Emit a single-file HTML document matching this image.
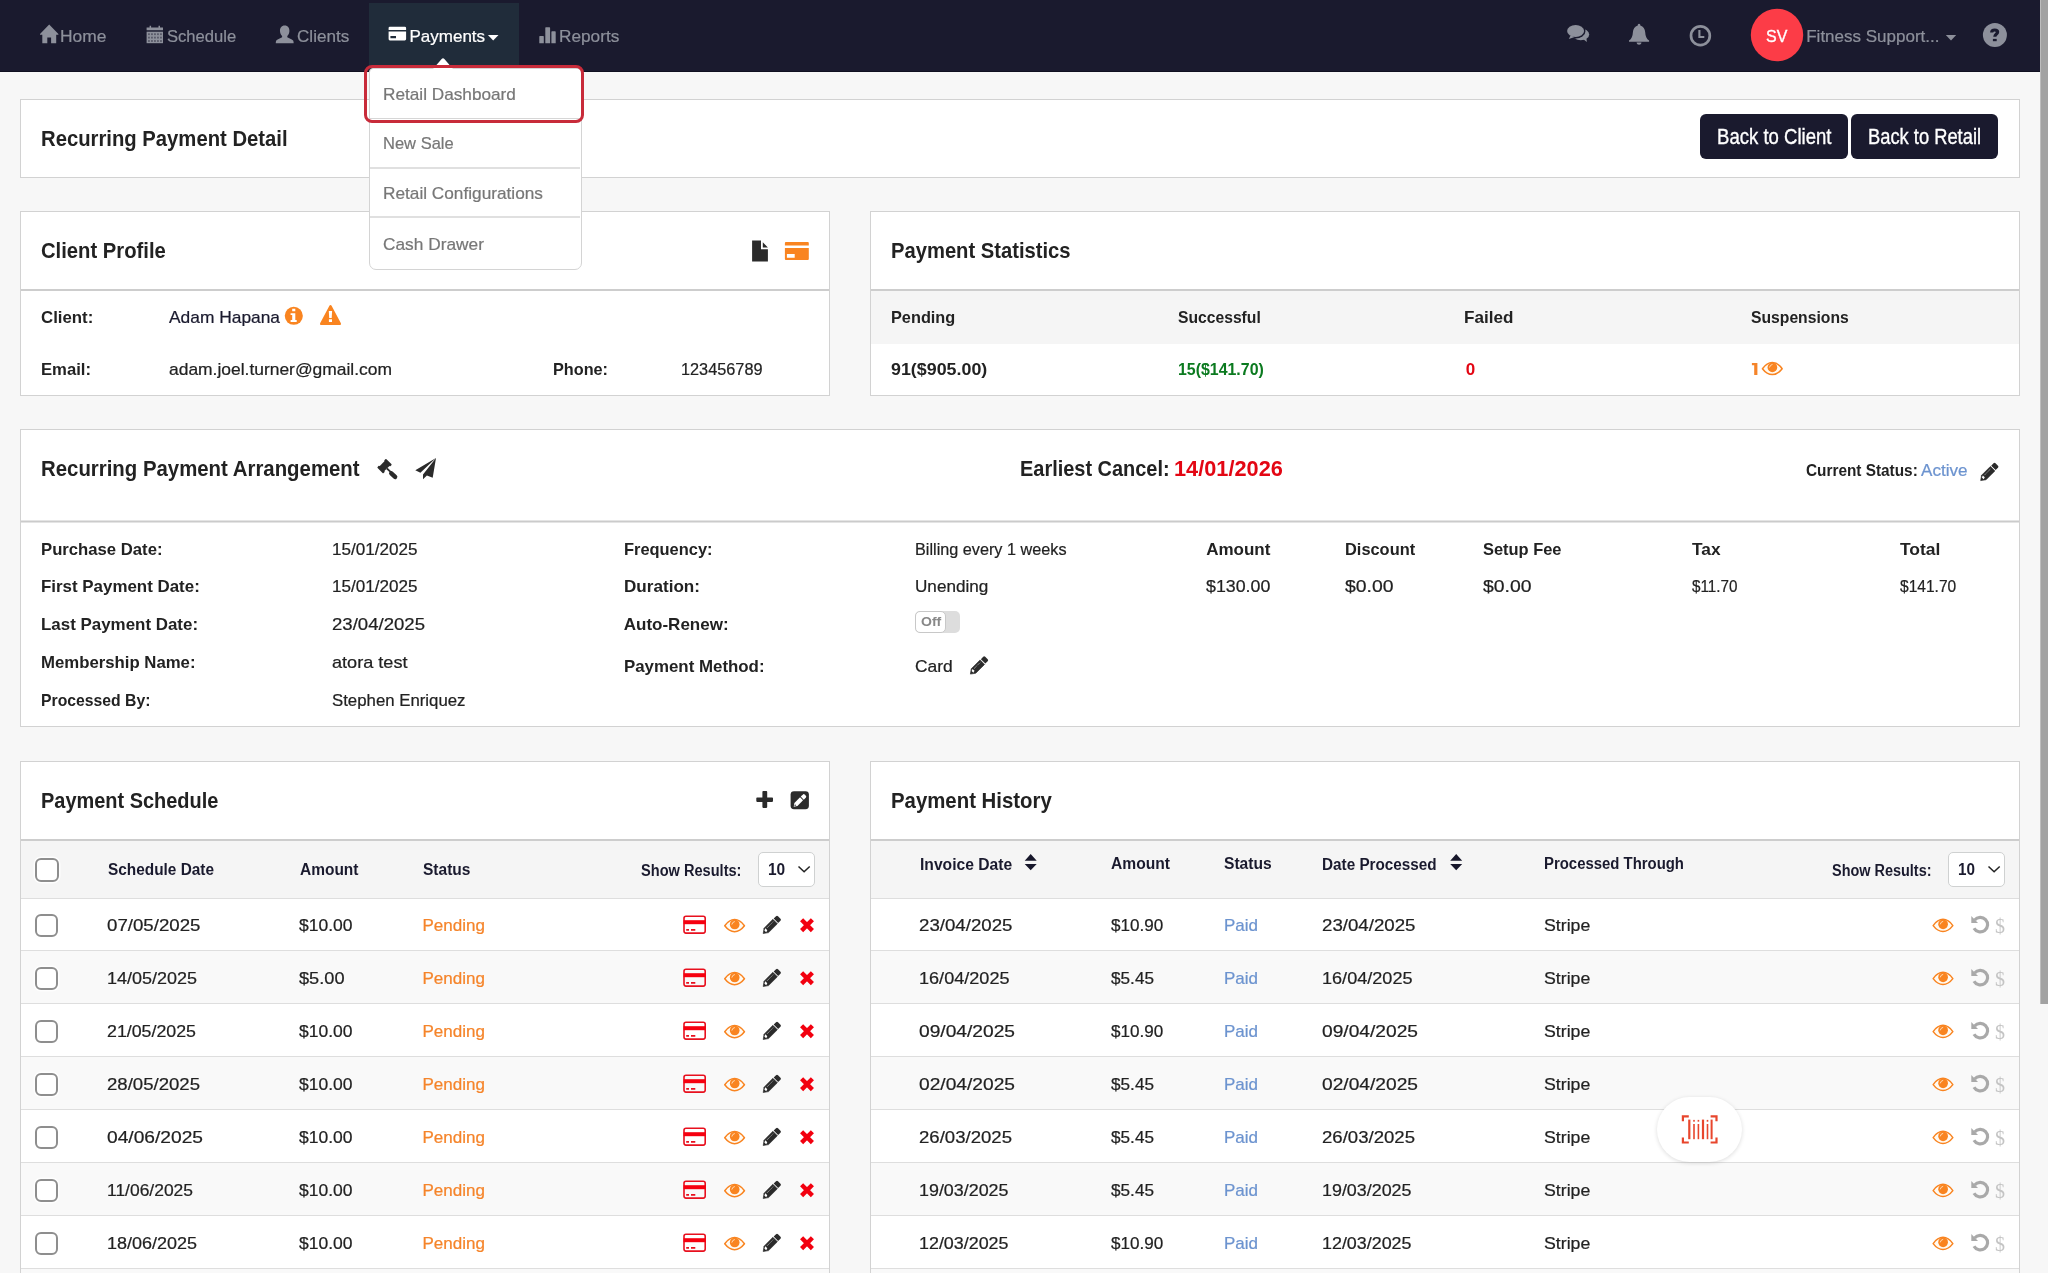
<!DOCTYPE html>
<html><head><meta charset="utf-8"><title>Recurring Payment Detail</title>
<style>
html,body{margin:0;padding:0}
body{width:2048px;height:1273px;overflow:hidden;position:relative;background:#f7f7f7;font-family:"Liberation Sans",sans-serif}
.t{position:absolute;white-space:nowrap;line-height:1;transform-origin:0 50%;font-family:"Liberation Sans",sans-serif}
.t.m{-webkit-text-stroke:0.35px currentColor}
.t.r{-webkit-text-stroke:0.22px currentColor}
.t.s{font-family:"Liberation Serif",serif}
.b{position:absolute;box-sizing:border-box}
.card{position:absolute;box-sizing:border-box;background:#fff;border:1px solid #d2d2d2}
svg{position:absolute;overflow:visible}
</style></head><body>
<!-- navbar -->
<div class="b" style="left:0;top:0;width:2040px;height:72px;background:#1a1a2e;border-bottom:1px solid #101020"></div>
<div class="b" style="left:368.6px;top:2.8px;width:150.2px;height:68.4px;background:#202c3a"></div>
<!-- scrollbar -->
<div class="b" style="left:2040px;top:0;width:8px;height:1004px;background:#a2a2a2;border-left:1px solid #bdbdbd"></div>

<!-- card 1 -->
<div class="card" style="left:20px;top:99px;width:2000px;height:79px"></div>
<div class="b" style="left:1700px;top:114px;width:148px;height:45px;background:#1a1a2e;border-radius:6px"></div>
<div class="b" style="left:1851px;top:114px;width:147px;height:45px;background:#1a1a2e;border-radius:6px"></div>

<!-- card 2 -->
<div class="card" style="left:20px;top:211px;width:810px;height:185px"></div>
<div class="b" style="left:21px;top:289px;width:808px;height:2px;background:#cdcdcd"></div>
<!-- card 3 -->
<div class="card" style="left:870px;top:211px;width:1150px;height:185px"></div>
<div class="b" style="left:871px;top:291px;width:1148px;height:53px;background:#f5f5f5"></div>
<div class="b" style="left:871px;top:289px;width:1148px;height:2px;background:#cdcdcd"></div>
<!-- card 4 -->
<div class="card" style="left:20px;top:429px;width:2000px;height:298px"></div>
<div class="b" style="left:21px;top:520px;width:1998px;height:3px;background:linear-gradient(#e4e4e4 0 1px,#cbcbcb 1px 2px,#e4e4e4 2px 3px)"></div>
<!-- toggle -->
<div class="b" style="left:915px;top:611px;width:45px;height:22px;background:#ddd;border-radius:5px"></div>
<div class="b" style="left:915px;top:611px;width:31px;height:22px;background:#fff;border:1px solid #c8c8c8;border-radius:5px"></div>

<!-- card 5 -->
<div class="card" style="left:20px;top:761px;width:810px;height:560px"></div>
<div class="b" style="left:21px;top:841px;width:808px;height:57px;background:#f5f5f5"></div>
<div class="b" style="left:21px;top:839px;width:808px;height:2px;background:#cdcdcd"></div>
<!-- card 6 -->
<div class="card" style="left:870px;top:761px;width:1150px;height:560px"></div>
<div class="b" style="left:871px;top:841px;width:1148px;height:57px;background:#f5f5f5"></div>
<div class="b" style="left:871px;top:839px;width:1148px;height:2px;background:#cdcdcd"></div>
<div class="b row" style="left:21px;top:898px;width:808px;height:52px;background:#fff;border-top:1px solid #dedede"></div>
<div class="b row" style="left:871px;top:898px;width:1148px;height:52px;background:#fff;border-top:1px solid #dedede"></div>
<div class="b row" style="left:21px;top:950px;width:808px;height:53px;background:#f9f9f9;border-top:1px solid #dedede"></div>
<div class="b row" style="left:871px;top:950px;width:1148px;height:53px;background:#f9f9f9;border-top:1px solid #dedede"></div>
<div class="b row" style="left:21px;top:1003px;width:808px;height:53px;background:#fff;border-top:1px solid #dedede"></div>
<div class="b row" style="left:871px;top:1003px;width:1148px;height:53px;background:#fff;border-top:1px solid #dedede"></div>
<div class="b row" style="left:21px;top:1056px;width:808px;height:53px;background:#f9f9f9;border-top:1px solid #dedede"></div>
<div class="b row" style="left:871px;top:1056px;width:1148px;height:53px;background:#f9f9f9;border-top:1px solid #dedede"></div>
<div class="b row" style="left:21px;top:1109px;width:808px;height:53px;background:#fff;border-top:1px solid #dedede"></div>
<div class="b row" style="left:871px;top:1109px;width:1148px;height:53px;background:#fff;border-top:1px solid #dedede"></div>
<div class="b row" style="left:21px;top:1162px;width:808px;height:53px;background:#f9f9f9;border-top:1px solid #dedede"></div>
<div class="b row" style="left:871px;top:1162px;width:1148px;height:53px;background:#f9f9f9;border-top:1px solid #dedede"></div>
<div class="b row" style="left:21px;top:1215px;width:808px;height:53px;background:#fff;border-top:1px solid #dedede"></div>
<div class="b row" style="left:871px;top:1215px;width:1148px;height:53px;background:#fff;border-top:1px solid #dedede"></div>
<div class="b row" style="left:21px;top:1268px;width:808px;height:53px;background:#f9f9f9;border-top:1px solid #dedede"></div>
<div class="b row" style="left:871px;top:1268px;width:1148px;height:53px;background:#f9f9f9;border-top:1px solid #dedede"></div>
<div class="b" style="left:34.5px;top:858px;width:24px;height:24px;background:#fff;border:2px solid #8e8e8e;border-radius:6px;box-shadow:0 0 0 1.5px rgba(255,255,255,.85)"></div>
<div class="b" style="left:34.6px;top:913.7px;width:23.6px;height:23.6px;background:#fff;border:2px solid #8e8e8e;border-radius:6px;box-shadow:0 0 0 1.5px rgba(255,255,255,.85)"></div>
<div class="b" style="left:34.6px;top:966.7px;width:23.6px;height:23.6px;background:#fff;border:2px solid #8e8e8e;border-radius:6px;box-shadow:0 0 0 1.5px rgba(255,255,255,.85)"></div>
<div class="b" style="left:34.6px;top:1019.7px;width:23.6px;height:23.6px;background:#fff;border:2px solid #8e8e8e;border-radius:6px;box-shadow:0 0 0 1.5px rgba(255,255,255,.85)"></div>
<div class="b" style="left:34.6px;top:1072.7px;width:23.6px;height:23.6px;background:#fff;border:2px solid #8e8e8e;border-radius:6px;box-shadow:0 0 0 1.5px rgba(255,255,255,.85)"></div>
<div class="b" style="left:34.6px;top:1125.7px;width:23.6px;height:23.6px;background:#fff;border:2px solid #8e8e8e;border-radius:6px;box-shadow:0 0 0 1.5px rgba(255,255,255,.85)"></div>
<div class="b" style="left:34.6px;top:1178.7px;width:23.6px;height:23.6px;background:#fff;border:2px solid #8e8e8e;border-radius:6px;box-shadow:0 0 0 1.5px rgba(255,255,255,.85)"></div>
<div class="b" style="left:34.6px;top:1231.7px;width:23.6px;height:23.6px;background:#fff;border:2px solid #8e8e8e;border-radius:6px;box-shadow:0 0 0 1.5px rgba(255,255,255,.85)"></div>
<div class="b" style="left:34.6px;top:1284.7px;width:23.6px;height:23.6px;background:#fff;border:2px solid #8e8e8e;border-radius:6px;box-shadow:0 0 0 1.5px rgba(255,255,255,.85)"></div>

<!-- selects -->
<div class="b" style="left:758px;top:852px;width:57px;height:35px;background:#fff;border:1px solid #cfd1d1;border-radius:5px"></div>
<div class="b" style="left:1948px;top:852px;width:57px;height:35px;background:#fff;border:1px solid #cfd1d1;border-radius:5px"></div>

<!-- dropdown -->
<div class="b" style="left:369px;top:68px;width:212.5px;height:201.5px;background:#fff;border:1.3px solid #d4d4d4;border-radius:4px 4px 7px 7px"></div>
<div class="b" style="left:370px;top:118px;width:210px;height:1px;background:#d6d6d6"></div>
<div class="b" style="left:370px;top:167px;width:210px;height:2px;background:#e0e0e0"></div>
<div class="b" style="left:370px;top:216px;width:210px;height:2px;background:#e0e0e0"></div>
<svg style="left:431px;top:58px" width="24" height="12" viewBox="0 0 24 12"><path d="M1.2 12 L10.6 1.0 Q12 -0.4 13.4 1.0 L22.8 12Z" fill="#fff"/></svg>
<div class="b" style="left:364.2px;top:64.8px;width:220px;height:58.7px;border:3px solid #c82b3a;border-radius:8px"></div>

<!-- floating barcode -->
<div class="b" style="left:1657px;top:1097px;width:85px;height:64.5px;background:#fff;border-radius:32.5px;box-shadow:0 1px 4px rgba(0,0,0,.14)"></div>

<svg style="left:0;top:0" width="2048" height="1273" viewBox="0 0 2048 1273">
<path d="M49.2 24.6 L58.4 34.0 L58.4 34.7 L56.2 34.7 L56.2 43.2 L51.1 43.2 L51.1 37.6 L47.3 37.6 L47.3 43.2 L42.3 43.2 L42.3 34.7 L40.0 34.7 L40.0 34.0 Z" fill="#8d909b"/>
<path d="M146.6 27.4 h16.4 v2.8 h-16.4z M149.6 25.8 h1.5 v2 h-1.5z M158.5 25.8 h1.5 v2 h-1.5z" fill="#8d909b"/>
<rect x="146.6" y="31.7" width="16.4" height="11.5" fill="#8d909b"/>
<rect x="148.20" y="33.30" width="1.5" height="1.8" fill="#1a1a2e" opacity="0.55"/>
<rect x="151.20" y="33.30" width="1.5" height="1.8" fill="#1a1a2e" opacity="0.55"/>
<rect x="154.20" y="33.30" width="1.5" height="1.8" fill="#1a1a2e" opacity="0.55"/>
<rect x="157.20" y="33.30" width="1.5" height="1.8" fill="#1a1a2e" opacity="0.55"/>
<rect x="160.20" y="33.30" width="1.5" height="1.8" fill="#1a1a2e" opacity="0.55"/>
<rect x="148.20" y="36.70" width="1.5" height="1.8" fill="#1a1a2e" opacity="0.55"/>
<rect x="151.20" y="36.70" width="1.5" height="1.8" fill="#1a1a2e" opacity="0.55"/>
<rect x="154.20" y="36.70" width="1.5" height="1.8" fill="#1a1a2e" opacity="0.55"/>
<rect x="157.20" y="36.70" width="1.5" height="1.8" fill="#1a1a2e" opacity="0.55"/>
<rect x="160.20" y="36.70" width="1.5" height="1.8" fill="#1a1a2e" opacity="0.55"/>
<rect x="148.20" y="40.10" width="1.5" height="1.8" fill="#1a1a2e" opacity="0.55"/>
<rect x="151.20" y="40.10" width="1.5" height="1.8" fill="#1a1a2e" opacity="0.55"/>
<rect x="154.20" y="40.10" width="1.5" height="1.8" fill="#1a1a2e" opacity="0.55"/>
<rect x="157.20" y="40.10" width="1.5" height="1.8" fill="#1a1a2e" opacity="0.55"/>
<rect x="160.20" y="40.10" width="1.5" height="1.8" fill="#1a1a2e" opacity="0.55"/>
<path d="M284.7 25.5 C288 25.5 289.6 28.2 289.4 31.2 C289.2 33.6 288.2 35.2 287.3 36.0 L287.3 37.3 L291.8 39.5 Q293.6 40.4 293.6 42.0 L293.6 43.2 L275.8 43.2 L275.8 42.0 Q275.8 40.4 277.6 39.5 L282.1 37.3 L282.1 36.0 C281.2 35.2 280.2 33.6 280.0 31.2 C279.8 28.2 281.4 25.5 284.7 25.5 Z" fill="#8d909b"/>
<path d="M389.9 26.7 h14.9 q1.3 0 1.3 1.3 v2.0 h-17.5 v-2.0 q0 -1.3 1.3 -1.3z M388.6 31.6 h17.5 v7.5 q0 1.3 -1.3 1.3 h-14.9 q-1.3 0 -1.3 -1.3z M390.4 36.0 v2.3 h5.6 v-2.3z" fill="#fff" fill-rule="evenodd"/>
<path d="M487.9 34.9 L498.5 34.9 L493.2 40.6 Z" fill="#fff"/>
<path d="M539.3 36.6 q0 -0.6 0.6 -0.6 h3.3 q0.6 0 0.6 0.6 v6.6 h-4.5z M545.3 27.8 q0 -0.6 0.6 -0.6 h3.6 q0.6 0 0.6 0.6 v15.4 h-4.8z M551.4 31.9 q0 -0.6 0.6 -0.6 h3.1 q0.6 0 0.6 0.6 v11.3 h-4.3z" fill="#8d909b"/>
<ellipse cx="1580.7" cy="34.4" rx="8.5" ry="5.8" fill="#8d909b"/>
<path d="M1583.0 39.0 L1586.9 41.9 L1586.4 38.0 Z" fill="#8d909b"/>
<ellipse cx="1575.6" cy="31.0" rx="9.9" ry="7.4" fill="#1a1a2e"/>
<path d="M1569.0 35.0 L1566.6 40.6 L1576.0 38.2 Z" fill="#1a1a2e"/>
<ellipse cx="1575.6" cy="31.0" rx="8.5" ry="6.0" fill="#8d909b"/>
<path d="M1570.6 35.6 L1568.8 38.9 L1574.8 36.9 Z" fill="#8d909b"/>
<path d="M1639.05 23.8 C1639.9 23.8 1640.4 24.5 1640.3 25.5 C1643.4 26.4 1645.0 28.9 1645.2 32.3 C1645.4 36.2 1646.6 39.0 1649.1 40.6 L1649.1 41.8 L1629.0 41.8 L1629.0 40.6 C1631.5 39.0 1632.7 36.2 1632.9 32.3 C1633.1 28.9 1634.7 26.4 1637.8 25.5 C1637.7 24.5 1638.2 23.8 1639.05 23.8 Z M1636.6 42.6 L1641.5 42.6 C1641.3 44.0 1640.3 44.8 1639.05 44.8 C1637.8 44.8 1636.8 44.0 1636.6 42.6 Z" fill="#8d909b"/>
<circle cx="1700.4" cy="35.7" r="9.4" fill="none" stroke="#8d909b" stroke-width="2.7"/>
<path d="M1699.4 30.0 L1699.4 37.0 L1704.3 37.0" fill="none" stroke="#8d909b" stroke-width="2.1"/>
<circle cx="1777" cy="35" r="26.2" fill="#fc3c47"/>
<path d="M1945.8 35.0 L1956.2 35.0 L1951.0 40.4 Z" fill="#8d909b"/>
<circle cx="1994.9" cy="35.1" r="12.0" fill="#8d909b"/>
<path d="M1991.7 32.5 C1991.7 30.7 1993.0 30.0 1994.7 30.0 C1996.5 30.0 1997.6 30.8 1997.6 32.0 C1997.6 34.0 1994.9 34.1 1994.8 36.8" fill="none" stroke="#1a1a2e" stroke-width="3.2"/>
<rect x="1992.9" y="38.9" width="3.8" height="2.3" fill="#1a1a2e"/>
<path d="M752.1 240.4 L761.0 240.4 L761.0 249.2 L767.9 249.2 L767.9 261.6 L752.1 261.6 Z M762.8 242.3 L762.8 247.4 L767.9 247.4 Z" fill="#2b2b2b"/>
<path d="M785.9 241.9 h21.9 q1.0 0 1.0 1.0 v2.7 h-23.9 v-2.7 q0 -1.0 1.0 -1.0z M784.9 248.0 h23.9 v10.9 q0 1.0 -1.0 1.0 h-21.9 q-1.0 0 -1.0 -1.0z M786.9 254.0 v3.7 h7.8 v-3.7z" fill="#f98420" fill-rule="evenodd"/>
<circle cx="293.8" cy="315.8" r="9.05" fill="#f98420"/>
<path d="M292.2 308.8 h3.1 v2.4 h-3.1z M290.6 313.2 h4.7 v6.9 h1.4 v1.8 h-6.1 v-1.8 h1.6 v-5.1 h-1.6z" fill="#fff"/>
<path d="M330.5 305.0 Q331.2 305.0 331.6 305.8 L340.9 323.2 Q341.6 324.9 340.0 324.9 L321.0 324.9 Q319.4 324.9 320.1 323.2 L329.4 305.8 Q329.8 305.0 330.5 305.0 Z" fill="#f98420"/>
<path d="M328.8 311.0 h3.3 l-0.4 7.0 h-2.5z M328.9 319.3 h3.1 v2.7 h-3.1z" fill="#fff"/>
<path d="M1751.9 363.0 L1757.4 363.0 L1757.4 375.1 L1754.2 375.1 L1754.2 365.3 L1751.9 365.3 Z" fill="#f5842a"/>
<path d="M1762.45 368.70 Q1766.88 362.45 1772.30 362.45 Q1777.72 362.45 1782.15 368.70 Q1777.72 374.55 1772.30 374.55 Q1766.88 374.55 1762.45 368.70 Z" fill="#fffaf2" stroke="#f98420" stroke-width="1.5" stroke-linejoin="round"/>
<circle cx="1772.40" cy="367.40" r="4.85" fill="#f98420"/>
<path d="M1769.60 367.10 A3.1 3.1 0 0 1 1772.10 364.50" fill="none" stroke="#ffe3c4" stroke-width="0.9" stroke-linecap="round"/>
<g transform="translate(384.5,466.05) rotate(45)" fill="#2b2b2b"><rect x="-3.4" y="-5.0" width="6.8" height="10.0"/><rect x="-4.25" y="-6.25" width="8.5" height="2.7" rx="0.8"/><rect x="-4.25" y="3.55" width="8.5" height="2.7" rx="0.8"/></g>
<path d="M386.9 468.5 L391.4 472.6" stroke="#2b2b2b" stroke-width="1.7"/>
<path d="M391.3 473.3 L395.1 476.9" stroke="#2b2b2b" stroke-width="4.5" stroke-linecap="round"/>
<path d="M436.0 458.0 L415.3 470.3 L420.4 472.7 Z M436.0 458.0 L423.0 474.5 L423.0 479.3 L426.9 475.6 L432.7 477.8 Z" fill="#2b2b2b"/>
<g transform="translate(1980.55,480.75) rotate(-45)"><path d="M0.2 0 L4.6 -3.15 L17.1 -3.15 L17.1 3.15 L4.6 3.15 Z" fill="#2b2b2b" stroke="#2b2b2b" stroke-width="0.6" stroke-linejoin="round"/><path d="M18.2 -3.15 L21.5 -3.15 Q22.9 -3.15 22.9 -1.75 L22.9 1.75 Q22.9 3.15 21.5 3.15 L18.2 3.15 Z" fill="#2b2b2b"/><path d="M3.2 -1.3 L5.4 -2.2 L5.4 0.6 L3.2 1.2 Z" fill="#fff"/><path d="M6.6 -1.3 L15.6 -1.3" stroke="#fff" stroke-width="0.7" opacity="0.75" stroke-dasharray="1.2 0.5"/></g>
<g transform="translate(970.25,674.25) rotate(-45)"><path d="M0.2 0 L4.6 -3.15 L17.1 -3.15 L17.1 3.15 L4.6 3.15 Z" fill="#2b2b2b" stroke="#2b2b2b" stroke-width="0.6" stroke-linejoin="round"/><path d="M18.2 -3.15 L21.5 -3.15 Q22.9 -3.15 22.9 -1.75 L22.9 1.75 Q22.9 3.15 21.5 3.15 L18.2 3.15 Z" fill="#2b2b2b"/><path d="M3.2 -1.3 L5.4 -2.2 L5.4 0.6 L3.2 1.2 Z" fill="#fff"/><path d="M6.6 -1.3 L15.6 -1.3" stroke="#fff" stroke-width="0.7" opacity="0.75" stroke-dasharray="1.2 0.5"/></g>
<path d="M762.4 791.9 q0 -0.8 0.8 -0.8 h3.2 q0.8 0 0.8 0.8 v5.5 h5.0 q0.8 0 0.8 0.8 v2.9 q0 0.8 -0.8 0.8 h-5.0 v5.2 q0 0.8 -0.8 0.8 h-3.2 q-0.8 0 -0.8 -0.8 v-5.2 h-5.3 q-0.8 0 -0.8 -0.8 v-2.9 q0 -0.8 0.8 -0.8 h5.3 z" fill="#2b2b2b"/>
<rect x="790.6" y="791.2" width="18.3" height="18.0" rx="3.4" fill="#2b2b2b"/>
<g transform="translate(793.5,806.9) rotate(-45)" fill="#fff"><path d="M0.3 0 L3.4 -2.15 L11.4 -2.15 L11.4 2.15 L3.4 2.15 Z"/><path d="M12.4 -2.15 L15.2 -2.15 Q16.6 -2.15 16.6 -0.9 L16.6 0.9 Q16.6 2.15 15.2 2.15 L12.4 2.15 Z"/><path d="M1.2 -0.1 L3.0 -0.9 L3.0 0.9 Z" fill="#2b2b2b"/></g>
<path d="M798.50 866.5 L804.10 871.8 L809.70 866.5" fill="none" stroke="#222" stroke-width="1.5"/>
<path d="M1988.50 866.5 L1994.10 871.8 L1999.70 866.5" fill="none" stroke="#222" stroke-width="1.5"/>
<path d="M1024.70 860.7 L1030.70 853.9 L1036.70 860.7 Z M1024.70 864.0 L1030.70 870.2 L1036.70 864.0 Z" fill="#17172b"/>
<path d="M1450.20 860.7 L1456.20 853.9 L1462.20 860.7 Z M1450.20 864.0 L1456.20 870.2 L1462.20 864.0 Z" fill="#17172b"/>
<rect x="684.0" y="916.30" width="21.2" height="16.8" rx="2.0" fill="none" stroke="#e8101e" stroke-width="1.6"/>
<rect x="683.6" y="920.20" width="22.0" height="4.0" fill="#f6000f"/>
<path d="M686.2 929.90 h2.8 M691.0 929.90 h4.3" stroke="#e8101e" stroke-width="1.7"/>
<path d="M724.75 925.80 Q729.18 919.55 734.60 919.55 Q740.02 919.55 744.45 925.80 Q740.02 931.65 734.60 931.65 Q729.18 931.65 724.75 925.80 Z" fill="#fffaf2" stroke="#f98420" stroke-width="1.5" stroke-linejoin="round"/>
<circle cx="734.70" cy="924.50" r="4.85" fill="#f98420"/>
<path d="M731.90 924.20 A3.1 3.1 0 0 1 734.40 921.60" fill="none" stroke="#ffe3c4" stroke-width="0.9" stroke-linecap="round"/>
<g transform="translate(763.05,933.65) rotate(-45)"><path d="M0.2 0 L4.6 -3.15 L17.1 -3.15 L17.1 3.15 L4.6 3.15 Z" fill="#2b2b2b" stroke="#2b2b2b" stroke-width="0.6" stroke-linejoin="round"/><path d="M18.2 -3.15 L21.5 -3.15 Q22.9 -3.15 22.9 -1.75 L22.9 1.75 Q22.9 3.15 21.5 3.15 L18.2 3.15 Z" fill="#2b2b2b"/><path d="M3.2 -1.3 L5.4 -2.2 L5.4 0.6 L3.2 1.2 Z" fill="#fff"/><path d="M6.6 -1.3 L15.6 -1.3" stroke="#fff" stroke-width="0.7" opacity="0.75" stroke-dasharray="1.2 0.5"/></g>
<path d="M801.6 919.80 L812.4 930.60 M812.4 919.80 L801.6 930.60" stroke="#f2000f" stroke-width="4.4" stroke-linecap="butt"/>
<path d="M1933.15 925.60 Q1937.58 919.35 1943.00 919.35 Q1948.42 919.35 1952.85 925.60 Q1948.42 931.45 1943.00 931.45 Q1937.58 931.45 1933.15 925.60 Z" fill="#fffaf2" stroke="#f98420" stroke-width="1.5" stroke-linejoin="round"/>
<circle cx="1943.10" cy="924.30" r="4.85" fill="#f98420"/>
<path d="M1940.30 924.00 A3.1 3.1 0 0 1 1942.80 921.40" fill="none" stroke="#ffe3c4" stroke-width="0.9" stroke-linecap="round"/>
<path d="M1974.63 920.01 A7.30 7.30 0 1 1 1973.98 928.25" fill="none" stroke="#a9a9a9" stroke-width="3.2"/>
<path d="M1971.3 916.00 L1971.3 922.90 L1978.0 922.90 Z" fill="#a9a9a9"/>
<rect x="684.0" y="969.30" width="21.2" height="16.8" rx="2.0" fill="none" stroke="#e8101e" stroke-width="1.6"/>
<rect x="683.6" y="973.20" width="22.0" height="4.0" fill="#f6000f"/>
<path d="M686.2 982.90 h2.8 M691.0 982.90 h4.3" stroke="#e8101e" stroke-width="1.7"/>
<path d="M724.75 978.80 Q729.18 972.55 734.60 972.55 Q740.02 972.55 744.45 978.80 Q740.02 984.65 734.60 984.65 Q729.18 984.65 724.75 978.80 Z" fill="#fffaf2" stroke="#f98420" stroke-width="1.5" stroke-linejoin="round"/>
<circle cx="734.70" cy="977.50" r="4.85" fill="#f98420"/>
<path d="M731.90 977.20 A3.1 3.1 0 0 1 734.40 974.60" fill="none" stroke="#ffe3c4" stroke-width="0.9" stroke-linecap="round"/>
<g transform="translate(763.05,986.65) rotate(-45)"><path d="M0.2 0 L4.6 -3.15 L17.1 -3.15 L17.1 3.15 L4.6 3.15 Z" fill="#2b2b2b" stroke="#2b2b2b" stroke-width="0.6" stroke-linejoin="round"/><path d="M18.2 -3.15 L21.5 -3.15 Q22.9 -3.15 22.9 -1.75 L22.9 1.75 Q22.9 3.15 21.5 3.15 L18.2 3.15 Z" fill="#2b2b2b"/><path d="M3.2 -1.3 L5.4 -2.2 L5.4 0.6 L3.2 1.2 Z" fill="#fff"/><path d="M6.6 -1.3 L15.6 -1.3" stroke="#fff" stroke-width="0.7" opacity="0.75" stroke-dasharray="1.2 0.5"/></g>
<path d="M801.6 972.80 L812.4 983.60 M812.4 972.80 L801.6 983.60" stroke="#f2000f" stroke-width="4.4" stroke-linecap="butt"/>
<path d="M1933.15 978.60 Q1937.58 972.35 1943.00 972.35 Q1948.42 972.35 1952.85 978.60 Q1948.42 984.45 1943.00 984.45 Q1937.58 984.45 1933.15 978.60 Z" fill="#fffaf2" stroke="#f98420" stroke-width="1.5" stroke-linejoin="round"/>
<circle cx="1943.10" cy="977.30" r="4.85" fill="#f98420"/>
<path d="M1940.30 977.00 A3.1 3.1 0 0 1 1942.80 974.40" fill="none" stroke="#ffe3c4" stroke-width="0.9" stroke-linecap="round"/>
<path d="M1974.63 973.01 A7.30 7.30 0 1 1 1973.98 981.25" fill="none" stroke="#a9a9a9" stroke-width="3.2"/>
<path d="M1971.3 969.00 L1971.3 975.90 L1978.0 975.90 Z" fill="#a9a9a9"/>
<rect x="684.0" y="1022.30" width="21.2" height="16.8" rx="2.0" fill="none" stroke="#e8101e" stroke-width="1.6"/>
<rect x="683.6" y="1026.20" width="22.0" height="4.0" fill="#f6000f"/>
<path d="M686.2 1035.90 h2.8 M691.0 1035.90 h4.3" stroke="#e8101e" stroke-width="1.7"/>
<path d="M724.75 1031.80 Q729.18 1025.55 734.60 1025.55 Q740.02 1025.55 744.45 1031.80 Q740.02 1037.65 734.60 1037.65 Q729.18 1037.65 724.75 1031.80 Z" fill="#fffaf2" stroke="#f98420" stroke-width="1.5" stroke-linejoin="round"/>
<circle cx="734.70" cy="1030.50" r="4.85" fill="#f98420"/>
<path d="M731.90 1030.20 A3.1 3.1 0 0 1 734.40 1027.60" fill="none" stroke="#ffe3c4" stroke-width="0.9" stroke-linecap="round"/>
<g transform="translate(763.05,1039.65) rotate(-45)"><path d="M0.2 0 L4.6 -3.15 L17.1 -3.15 L17.1 3.15 L4.6 3.15 Z" fill="#2b2b2b" stroke="#2b2b2b" stroke-width="0.6" stroke-linejoin="round"/><path d="M18.2 -3.15 L21.5 -3.15 Q22.9 -3.15 22.9 -1.75 L22.9 1.75 Q22.9 3.15 21.5 3.15 L18.2 3.15 Z" fill="#2b2b2b"/><path d="M3.2 -1.3 L5.4 -2.2 L5.4 0.6 L3.2 1.2 Z" fill="#fff"/><path d="M6.6 -1.3 L15.6 -1.3" stroke="#fff" stroke-width="0.7" opacity="0.75" stroke-dasharray="1.2 0.5"/></g>
<path d="M801.6 1025.80 L812.4 1036.60 M812.4 1025.80 L801.6 1036.60" stroke="#f2000f" stroke-width="4.4" stroke-linecap="butt"/>
<path d="M1933.15 1031.60 Q1937.58 1025.35 1943.00 1025.35 Q1948.42 1025.35 1952.85 1031.60 Q1948.42 1037.45 1943.00 1037.45 Q1937.58 1037.45 1933.15 1031.60 Z" fill="#fffaf2" stroke="#f98420" stroke-width="1.5" stroke-linejoin="round"/>
<circle cx="1943.10" cy="1030.30" r="4.85" fill="#f98420"/>
<path d="M1940.30 1030.00 A3.1 3.1 0 0 1 1942.80 1027.40" fill="none" stroke="#ffe3c4" stroke-width="0.9" stroke-linecap="round"/>
<path d="M1974.63 1026.01 A7.30 7.30 0 1 1 1973.98 1034.25" fill="none" stroke="#a9a9a9" stroke-width="3.2"/>
<path d="M1971.3 1022.00 L1971.3 1028.90 L1978.0 1028.90 Z" fill="#a9a9a9"/>
<rect x="684.0" y="1075.30" width="21.2" height="16.8" rx="2.0" fill="none" stroke="#e8101e" stroke-width="1.6"/>
<rect x="683.6" y="1079.20" width="22.0" height="4.0" fill="#f6000f"/>
<path d="M686.2 1088.90 h2.8 M691.0 1088.90 h4.3" stroke="#e8101e" stroke-width="1.7"/>
<path d="M724.75 1084.80 Q729.18 1078.55 734.60 1078.55 Q740.02 1078.55 744.45 1084.80 Q740.02 1090.65 734.60 1090.65 Q729.18 1090.65 724.75 1084.80 Z" fill="#fffaf2" stroke="#f98420" stroke-width="1.5" stroke-linejoin="round"/>
<circle cx="734.70" cy="1083.50" r="4.85" fill="#f98420"/>
<path d="M731.90 1083.20 A3.1 3.1 0 0 1 734.40 1080.60" fill="none" stroke="#ffe3c4" stroke-width="0.9" stroke-linecap="round"/>
<g transform="translate(763.05,1092.65) rotate(-45)"><path d="M0.2 0 L4.6 -3.15 L17.1 -3.15 L17.1 3.15 L4.6 3.15 Z" fill="#2b2b2b" stroke="#2b2b2b" stroke-width="0.6" stroke-linejoin="round"/><path d="M18.2 -3.15 L21.5 -3.15 Q22.9 -3.15 22.9 -1.75 L22.9 1.75 Q22.9 3.15 21.5 3.15 L18.2 3.15 Z" fill="#2b2b2b"/><path d="M3.2 -1.3 L5.4 -2.2 L5.4 0.6 L3.2 1.2 Z" fill="#fff"/><path d="M6.6 -1.3 L15.6 -1.3" stroke="#fff" stroke-width="0.7" opacity="0.75" stroke-dasharray="1.2 0.5"/></g>
<path d="M801.6 1078.80 L812.4 1089.60 M812.4 1078.80 L801.6 1089.60" stroke="#f2000f" stroke-width="4.4" stroke-linecap="butt"/>
<path d="M1933.15 1084.60 Q1937.58 1078.35 1943.00 1078.35 Q1948.42 1078.35 1952.85 1084.60 Q1948.42 1090.45 1943.00 1090.45 Q1937.58 1090.45 1933.15 1084.60 Z" fill="#fffaf2" stroke="#f98420" stroke-width="1.5" stroke-linejoin="round"/>
<circle cx="1943.10" cy="1083.30" r="4.85" fill="#f98420"/>
<path d="M1940.30 1083.00 A3.1 3.1 0 0 1 1942.80 1080.40" fill="none" stroke="#ffe3c4" stroke-width="0.9" stroke-linecap="round"/>
<path d="M1974.63 1079.01 A7.30 7.30 0 1 1 1973.98 1087.25" fill="none" stroke="#a9a9a9" stroke-width="3.2"/>
<path d="M1971.3 1075.00 L1971.3 1081.90 L1978.0 1081.90 Z" fill="#a9a9a9"/>
<rect x="684.0" y="1128.30" width="21.2" height="16.8" rx="2.0" fill="none" stroke="#e8101e" stroke-width="1.6"/>
<rect x="683.6" y="1132.20" width="22.0" height="4.0" fill="#f6000f"/>
<path d="M686.2 1141.90 h2.8 M691.0 1141.90 h4.3" stroke="#e8101e" stroke-width="1.7"/>
<path d="M724.75 1137.80 Q729.18 1131.55 734.60 1131.55 Q740.02 1131.55 744.45 1137.80 Q740.02 1143.65 734.60 1143.65 Q729.18 1143.65 724.75 1137.80 Z" fill="#fffaf2" stroke="#f98420" stroke-width="1.5" stroke-linejoin="round"/>
<circle cx="734.70" cy="1136.50" r="4.85" fill="#f98420"/>
<path d="M731.90 1136.20 A3.1 3.1 0 0 1 734.40 1133.60" fill="none" stroke="#ffe3c4" stroke-width="0.9" stroke-linecap="round"/>
<g transform="translate(763.05,1145.65) rotate(-45)"><path d="M0.2 0 L4.6 -3.15 L17.1 -3.15 L17.1 3.15 L4.6 3.15 Z" fill="#2b2b2b" stroke="#2b2b2b" stroke-width="0.6" stroke-linejoin="round"/><path d="M18.2 -3.15 L21.5 -3.15 Q22.9 -3.15 22.9 -1.75 L22.9 1.75 Q22.9 3.15 21.5 3.15 L18.2 3.15 Z" fill="#2b2b2b"/><path d="M3.2 -1.3 L5.4 -2.2 L5.4 0.6 L3.2 1.2 Z" fill="#fff"/><path d="M6.6 -1.3 L15.6 -1.3" stroke="#fff" stroke-width="0.7" opacity="0.75" stroke-dasharray="1.2 0.5"/></g>
<path d="M801.6 1131.80 L812.4 1142.60 M812.4 1131.80 L801.6 1142.60" stroke="#f2000f" stroke-width="4.4" stroke-linecap="butt"/>
<path d="M1933.15 1137.60 Q1937.58 1131.35 1943.00 1131.35 Q1948.42 1131.35 1952.85 1137.60 Q1948.42 1143.45 1943.00 1143.45 Q1937.58 1143.45 1933.15 1137.60 Z" fill="#fffaf2" stroke="#f98420" stroke-width="1.5" stroke-linejoin="round"/>
<circle cx="1943.10" cy="1136.30" r="4.85" fill="#f98420"/>
<path d="M1940.30 1136.00 A3.1 3.1 0 0 1 1942.80 1133.40" fill="none" stroke="#ffe3c4" stroke-width="0.9" stroke-linecap="round"/>
<path d="M1974.63 1132.01 A7.30 7.30 0 1 1 1973.98 1140.25" fill="none" stroke="#a9a9a9" stroke-width="3.2"/>
<path d="M1971.3 1128.00 L1971.3 1134.90 L1978.0 1134.90 Z" fill="#a9a9a9"/>
<rect x="684.0" y="1181.30" width="21.2" height="16.8" rx="2.0" fill="none" stroke="#e8101e" stroke-width="1.6"/>
<rect x="683.6" y="1185.20" width="22.0" height="4.0" fill="#f6000f"/>
<path d="M686.2 1194.90 h2.8 M691.0 1194.90 h4.3" stroke="#e8101e" stroke-width="1.7"/>
<path d="M724.75 1190.80 Q729.18 1184.55 734.60 1184.55 Q740.02 1184.55 744.45 1190.80 Q740.02 1196.65 734.60 1196.65 Q729.18 1196.65 724.75 1190.80 Z" fill="#fffaf2" stroke="#f98420" stroke-width="1.5" stroke-linejoin="round"/>
<circle cx="734.70" cy="1189.50" r="4.85" fill="#f98420"/>
<path d="M731.90 1189.20 A3.1 3.1 0 0 1 734.40 1186.60" fill="none" stroke="#ffe3c4" stroke-width="0.9" stroke-linecap="round"/>
<g transform="translate(763.05,1198.65) rotate(-45)"><path d="M0.2 0 L4.6 -3.15 L17.1 -3.15 L17.1 3.15 L4.6 3.15 Z" fill="#2b2b2b" stroke="#2b2b2b" stroke-width="0.6" stroke-linejoin="round"/><path d="M18.2 -3.15 L21.5 -3.15 Q22.9 -3.15 22.9 -1.75 L22.9 1.75 Q22.9 3.15 21.5 3.15 L18.2 3.15 Z" fill="#2b2b2b"/><path d="M3.2 -1.3 L5.4 -2.2 L5.4 0.6 L3.2 1.2 Z" fill="#fff"/><path d="M6.6 -1.3 L15.6 -1.3" stroke="#fff" stroke-width="0.7" opacity="0.75" stroke-dasharray="1.2 0.5"/></g>
<path d="M801.6 1184.80 L812.4 1195.60 M812.4 1184.80 L801.6 1195.60" stroke="#f2000f" stroke-width="4.4" stroke-linecap="butt"/>
<path d="M1933.15 1190.60 Q1937.58 1184.35 1943.00 1184.35 Q1948.42 1184.35 1952.85 1190.60 Q1948.42 1196.45 1943.00 1196.45 Q1937.58 1196.45 1933.15 1190.60 Z" fill="#fffaf2" stroke="#f98420" stroke-width="1.5" stroke-linejoin="round"/>
<circle cx="1943.10" cy="1189.30" r="4.85" fill="#f98420"/>
<path d="M1940.30 1189.00 A3.1 3.1 0 0 1 1942.80 1186.40" fill="none" stroke="#ffe3c4" stroke-width="0.9" stroke-linecap="round"/>
<path d="M1974.63 1185.01 A7.30 7.30 0 1 1 1973.98 1193.25" fill="none" stroke="#a9a9a9" stroke-width="3.2"/>
<path d="M1971.3 1181.00 L1971.3 1187.90 L1978.0 1187.90 Z" fill="#a9a9a9"/>
<rect x="684.0" y="1234.30" width="21.2" height="16.8" rx="2.0" fill="none" stroke="#e8101e" stroke-width="1.6"/>
<rect x="683.6" y="1238.20" width="22.0" height="4.0" fill="#f6000f"/>
<path d="M686.2 1247.90 h2.8 M691.0 1247.90 h4.3" stroke="#e8101e" stroke-width="1.7"/>
<path d="M724.75 1243.80 Q729.18 1237.55 734.60 1237.55 Q740.02 1237.55 744.45 1243.80 Q740.02 1249.65 734.60 1249.65 Q729.18 1249.65 724.75 1243.80 Z" fill="#fffaf2" stroke="#f98420" stroke-width="1.5" stroke-linejoin="round"/>
<circle cx="734.70" cy="1242.50" r="4.85" fill="#f98420"/>
<path d="M731.90 1242.20 A3.1 3.1 0 0 1 734.40 1239.60" fill="none" stroke="#ffe3c4" stroke-width="0.9" stroke-linecap="round"/>
<g transform="translate(763.05,1251.65) rotate(-45)"><path d="M0.2 0 L4.6 -3.15 L17.1 -3.15 L17.1 3.15 L4.6 3.15 Z" fill="#2b2b2b" stroke="#2b2b2b" stroke-width="0.6" stroke-linejoin="round"/><path d="M18.2 -3.15 L21.5 -3.15 Q22.9 -3.15 22.9 -1.75 L22.9 1.75 Q22.9 3.15 21.5 3.15 L18.2 3.15 Z" fill="#2b2b2b"/><path d="M3.2 -1.3 L5.4 -2.2 L5.4 0.6 L3.2 1.2 Z" fill="#fff"/><path d="M6.6 -1.3 L15.6 -1.3" stroke="#fff" stroke-width="0.7" opacity="0.75" stroke-dasharray="1.2 0.5"/></g>
<path d="M801.6 1237.80 L812.4 1248.60 M812.4 1237.80 L801.6 1248.60" stroke="#f2000f" stroke-width="4.4" stroke-linecap="butt"/>
<path d="M1933.15 1243.60 Q1937.58 1237.35 1943.00 1237.35 Q1948.42 1237.35 1952.85 1243.60 Q1948.42 1249.45 1943.00 1249.45 Q1937.58 1249.45 1933.15 1243.60 Z" fill="#fffaf2" stroke="#f98420" stroke-width="1.5" stroke-linejoin="round"/>
<circle cx="1943.10" cy="1242.30" r="4.85" fill="#f98420"/>
<path d="M1940.30 1242.00 A3.1 3.1 0 0 1 1942.80 1239.40" fill="none" stroke="#ffe3c4" stroke-width="0.9" stroke-linecap="round"/>
<path d="M1974.63 1238.01 A7.30 7.30 0 1 1 1973.98 1246.25" fill="none" stroke="#a9a9a9" stroke-width="3.2"/>
<path d="M1971.3 1234.00 L1971.3 1240.90 L1978.0 1240.90 Z" fill="#a9a9a9"/>
<rect x="684.0" y="1287.30" width="21.2" height="16.8" rx="2.0" fill="none" stroke="#e8101e" stroke-width="1.6"/>
<rect x="683.6" y="1291.20" width="22.0" height="4.0" fill="#f6000f"/>
<path d="M686.2 1300.90 h2.8 M691.0 1300.90 h4.3" stroke="#e8101e" stroke-width="1.7"/>
<path d="M724.75 1296.80 Q729.18 1290.55 734.60 1290.55 Q740.02 1290.55 744.45 1296.80 Q740.02 1302.65 734.60 1302.65 Q729.18 1302.65 724.75 1296.80 Z" fill="#fffaf2" stroke="#f98420" stroke-width="1.5" stroke-linejoin="round"/>
<circle cx="734.70" cy="1295.50" r="4.85" fill="#f98420"/>
<path d="M731.90 1295.20 A3.1 3.1 0 0 1 734.40 1292.60" fill="none" stroke="#ffe3c4" stroke-width="0.9" stroke-linecap="round"/>
<g transform="translate(763.05,1304.65) rotate(-45)"><path d="M0.2 0 L4.6 -3.15 L17.1 -3.15 L17.1 3.15 L4.6 3.15 Z" fill="#2b2b2b" stroke="#2b2b2b" stroke-width="0.6" stroke-linejoin="round"/><path d="M18.2 -3.15 L21.5 -3.15 Q22.9 -3.15 22.9 -1.75 L22.9 1.75 Q22.9 3.15 21.5 3.15 L18.2 3.15 Z" fill="#2b2b2b"/><path d="M3.2 -1.3 L5.4 -2.2 L5.4 0.6 L3.2 1.2 Z" fill="#fff"/><path d="M6.6 -1.3 L15.6 -1.3" stroke="#fff" stroke-width="0.7" opacity="0.75" stroke-dasharray="1.2 0.5"/></g>
<path d="M801.6 1290.80 L812.4 1301.60 M812.4 1290.80 L801.6 1301.60" stroke="#f2000f" stroke-width="4.4" stroke-linecap="butt"/>
<path d="M1933.15 1296.60 Q1937.58 1290.35 1943.00 1290.35 Q1948.42 1290.35 1952.85 1296.60 Q1948.42 1302.45 1943.00 1302.45 Q1937.58 1302.45 1933.15 1296.60 Z" fill="#fffaf2" stroke="#f98420" stroke-width="1.5" stroke-linejoin="round"/>
<circle cx="1943.10" cy="1295.30" r="4.85" fill="#f98420"/>
<path d="M1940.30 1295.00 A3.1 3.1 0 0 1 1942.80 1292.40" fill="none" stroke="#ffe3c4" stroke-width="0.9" stroke-linecap="round"/>
<path d="M1974.63 1291.01 A7.30 7.30 0 1 1 1973.98 1299.25" fill="none" stroke="#a9a9a9" stroke-width="3.2"/>
<path d="M1971.3 1287.00 L1971.3 1293.90 L1978.0 1293.90 Z" fill="#a9a9a9"/>
<path d="M1688.80 1116.40 L1682.90 1116.40 L1682.90 1121.30" fill="none" stroke="#e8462d" stroke-width="2.2"/>
<path d="M1710.60 1116.40 L1716.50 1116.40 L1716.50 1121.30" fill="none" stroke="#e8462d" stroke-width="2.2"/>
<path d="M1688.80 1142.50 L1682.90 1142.50 L1682.90 1137.60" fill="none" stroke="#e8462d" stroke-width="2.2"/>
<path d="M1710.60 1142.50 L1716.50 1142.50 L1716.50 1137.60" fill="none" stroke="#e8462d" stroke-width="2.2"/>
<rect x="1688.20" y="1119.6" width="2.20" height="19.6" fill="#e8462d"/>
<rect x="1693.20" y="1124.0" width="1.60" height="15.2" fill="#e8462d"/>
<rect x="1693.20" y="1119.9" width="1.60" height="1.8" fill="#e8462d"/>
<rect x="1697.60" y="1124.0" width="1.60" height="15.2" fill="#e8462d"/>
<rect x="1697.60" y="1119.9" width="1.60" height="1.8" fill="#e8462d"/>
<rect x="1701.90" y="1119.6" width="2.20" height="19.6" fill="#e8462d"/>
<rect x="1706.70" y="1124.0" width="1.60" height="15.2" fill="#e8462d"/>
<rect x="1706.70" y="1119.9" width="1.60" height="1.8" fill="#e8462d"/>
<rect x="1710.60" y="1119.6" width="2.00" height="19.6" fill="#e8462d"/>
</svg>
<div id="tx" style="position:absolute;left:0;top:0;width:2048px;height:1273px;will-change:transform">
<span id="t0" class="t r" style="left:60.49px;top:28px;font-size:17px;color:#8d909b;transform:scaleX(1.0234);">Home</span>
<span id="t1" class="t r" style="left:167.29px;top:28px;font-size:17px;color:#8d909b;transform:scaleX(0.9764);">Schedule</span>
<span id="t2" class="t r" style="left:296.89px;top:28px;font-size:17px;color:#8d909b;transform:scaleX(1.0048);">Clients</span>
<span id="t3" class="t r" style="left:409.49px;top:28px;font-size:17px;color:#fff;">Payments</span>
<span id="t4" class="t r" style="left:558.99px;top:28px;font-size:17px;color:#8d909b;transform:scaleX(1.0124);">Reports</span>
<span id="t5" class="t m" style="left:1765.99px;top:28px;font-size:17px;color:#fff;transform:scaleX(0.9375);">SV</span>
<span id="t6" class="t r" style="left:1806.24px;top:28px;font-size:17px;color:#8d909b;">Fitness Support...</span>
<span id="t7" class="t r" style="left:383.39px;top:86px;font-size:17px;color:#777;transform:scaleX(1.0115);">Retail Dashboard</span>
<span id="t8" class="t r" style="left:383.39px;top:135px;font-size:17px;color:#777;transform:scaleX(0.9719);">New Sale</span>
<span id="t9" class="t r" style="left:383.39px;top:185px;font-size:17px;color:#777;transform:scaleX(1.0134);">Retail Configurations</span>
<span id="t10" class="t r" style="left:383.39px;top:236px;font-size:17px;color:#777;transform:scaleX(1.0173);">Cash Drawer</span>
<span id="t11" class="t" style="left:40.84px;top:128px;font-size:22px;color:#222;font-weight:700;transform:scaleX(0.9209);">Recurring Payment Detail</span>
<span id="t12" class="t m" style="left:1717.11px;top:127px;font-size:21.5px;color:#fff;transform:scaleX(0.8634);">Back to Client</span>
<span id="t13" class="t m" style="left:1867.86px;top:127px;font-size:21.5px;color:#fff;transform:scaleX(0.8521);">Back to Retail</span>
<span id="t14" class="t" style="left:40.84px;top:240px;font-size:22px;color:#222;font-weight:700;transform:scaleX(0.9199);">Client Profile</span>
<span id="t15" class="t" style="left:40.99px;top:309px;font-size:17px;color:#222;font-weight:700;transform:scaleX(0.9883);">Client:</span>
<span id="t16" class="t r" style="left:169.49px;top:309px;font-size:17px;color:#1a1a2e;transform:scaleX(1.0215);">Adam Hapana</span>
<span id="t17" class="t" style="left:40.99px;top:361px;font-size:17px;color:#222;font-weight:700;transform:scaleX(0.9802);">Email:</span>
<span id="t18" class="t r" style="left:168.89px;top:361px;font-size:17px;color:#222;transform:scaleX(1.0250);">adam.joel.turner@gmail.com</span>
<span id="t19" class="t" style="left:552.79px;top:361px;font-size:17px;color:#222;font-weight:700;transform:scaleX(0.9551);">Phone:</span>
<span id="t20" class="t r" style="left:680.69px;top:361px;font-size:17px;color:#222;transform:scaleX(0.9580);">123456789</span>
<span id="t21" class="t" style="left:891.09px;top:240px;font-size:22px;color:#222;font-weight:700;transform:scaleX(0.9179);">Payment Statistics</span>
<span id="t22" class="t" style="left:891.24px;top:309px;font-size:17px;color:#222;font-weight:700;transform:scaleX(0.9584);">Pending</span>
<span id="t23" class="t" style="left:1177.74px;top:309px;font-size:17px;color:#222;font-weight:700;transform:scaleX(0.9221);">Successful</span>
<span id="t24" class="t" style="left:1464.49px;top:309px;font-size:17px;color:#222;font-weight:700;transform:scaleX(1.0040);">Failed</span>
<span id="t25" class="t" style="left:1751.49px;top:309px;font-size:17px;color:#222;font-weight:700;transform:scaleX(0.9235);">Suspensions</span>
<span id="t26" class="t" style="left:891.24px;top:361px;font-size:17px;color:#222;font-weight:700;transform:scaleX(1.0500);">91($905.00)</span>
<span id="t27" class="t" style="left:1177.74px;top:361px;font-size:17px;color:#0b7a1f;font-weight:700;transform:scaleX(0.9355);">15($141.70)</span>
<span id="t28" class="t" style="left:1465.77px;top:361px;font-size:17px;color:#e30613;font-weight:700;">0</span>
<span id="t29" class="t" style="left:40.84px;top:458px;font-size:22px;color:#222;font-weight:700;transform:scaleX(0.9262);">Recurring Payment Arrangement</span>
<span id="t30" class="t" style="left:1019.84px;top:458px;font-size:22px;color:#222;font-weight:700;transform:scaleX(0.9061);">Earliest Cancel:</span>
<span id="t31" class="t" style="left:1173.84px;top:458px;font-size:22px;color:#e30613;font-weight:700;transform:scaleX(0.9883);">14/01/2026</span>
<span id="t32" class="t" style="left:1806.12px;top:463px;font-size:16px;color:#222;font-weight:700;transform:scaleX(0.9597);">Current Status:</span>
<span id="t33" class="t r" style="left:1921.02px;top:463px;font-size:16px;color:#6c93cf;transform:scaleX(1.0661);">Active</span>
<span id="t34" class="t" style="left:40.99px;top:541px;font-size:17px;color:#222;font-weight:700;transform:scaleX(0.9817);">Purchase Date:</span>
<span id="t35" class="t r" style="left:332.49px;top:541px;font-size:17px;color:#222;transform:scaleX(1.0050);">15/01/2025</span>
<span id="t36" class="t" style="left:40.99px;top:578px;font-size:17px;color:#222;font-weight:700;transform:scaleX(0.9944);">First Payment Date:</span>
<span id="t37" class="t r" style="left:332.49px;top:578px;font-size:17px;color:#222;transform:scaleX(1.0050);">15/01/2025</span>
<span id="t38" class="t" style="left:40.99px;top:616px;font-size:17px;color:#222;font-weight:700;transform:scaleX(0.9952);">Last Payment Date:</span>
<span id="t39" class="t r" style="left:332.49px;top:616px;font-size:17px;color:#222;transform:scaleX(1.0931);">23/04/2025</span>
<span id="t40" class="t" style="left:40.99px;top:654px;font-size:17px;color:#222;font-weight:700;transform:scaleX(0.9853);">Membership Name:</span>
<span id="t41" class="t r" style="left:332.49px;top:654px;font-size:17px;color:#222;transform:scaleX(1.0655);">atora test</span>
<span id="t42" class="t" style="left:40.99px;top:692px;font-size:17px;color:#222;font-weight:700;transform:scaleX(0.9272);">Processed By:</span>
<span id="t43" class="t r" style="left:332.49px;top:692px;font-size:17px;color:#222;transform:scaleX(0.9879);">Stephen Enriquez</span>
<span id="t44" class="t" style="left:623.74px;top:541px;font-size:17px;color:#222;font-weight:700;transform:scaleX(0.9659);">Frequency:</span>
<span id="t45" class="t r" style="left:915.24px;top:541px;font-size:17px;color:#222;transform:scaleX(0.9545);">Billing every 1 weeks</span>
<span id="t46" class="t" style="left:623.74px;top:578px;font-size:17px;color:#222;font-weight:700;transform:scaleX(1.0063);">Duration:</span>
<span id="t47" class="t r" style="left:915.24px;top:578px;font-size:17px;color:#222;transform:scaleX(1.0067);">Unending</span>
<span id="t48" class="t" style="left:623.74px;top:616px;font-size:17px;color:#222;font-weight:700;">Auto-Renew:</span>
<span id="t49" class="t" style="left:623.74px;top:658px;font-size:17px;color:#222;font-weight:700;transform:scaleX(0.9918);">Payment Method:</span>
<span id="t50" class="t r" style="left:915.24px;top:658px;font-size:17px;color:#222;transform:scaleX(1.0247);">Card</span>
<span id="t51" class="t" style="left:920.61px;top:615px;font-size:13px;color:#888;font-weight:700;transform:scaleX(1.0798);">Off</span>
<span id="t52" class="t" style="left:1206.19px;top:541px;font-size:17px;color:#222;font-weight:700;">Amount</span>
<span id="t53" class="t r" style="left:1206.19px;top:578px;font-size:17px;color:#222;transform:scaleX(1.0467);">$130.00</span>
<span id="t54" class="t" style="left:1344.79px;top:541px;font-size:17px;color:#222;font-weight:700;transform:scaleX(0.9641);">Discount</span>
<span id="t55" class="t r" style="left:1344.79px;top:578px;font-size:17px;color:#222;transform:scaleX(1.1404);">$0.00</span>
<span id="t56" class="t" style="left:1483.49px;top:541px;font-size:17px;color:#222;font-weight:700;transform:scaleX(0.9664);">Setup Fee</span>
<span id="t57" class="t r" style="left:1483.49px;top:578px;font-size:17px;color:#222;transform:scaleX(1.1404);">$0.00</span>
<span id="t58" class="t" style="left:1692.49px;top:541px;font-size:17px;color:#222;font-weight:700;transform:scaleX(1.0169);">Tax</span>
<span id="t59" class="t r" style="left:1692.49px;top:578px;font-size:17px;color:#222;transform:scaleX(0.8953);">$11.70</span>
<span id="t60" class="t" style="left:1900.09px;top:541px;font-size:17px;color:#222;font-weight:700;transform:scaleX(1.0269);">Total</span>
<span id="t61" class="t r" style="left:1900.09px;top:578px;font-size:17px;color:#222;transform:scaleX(0.9148);">$141.70</span>
<span id="t62" class="t" style="left:40.84px;top:790px;font-size:22px;color:#222;font-weight:700;transform:scaleX(0.9064);">Payment Schedule</span>
<span id="t63" class="t" style="left:107.52px;top:862px;font-size:16px;color:#1a1a2e;font-weight:700;transform:scaleX(0.9610);">Schedule Date</span>
<span id="t64" class="t" style="left:299.52px;top:862px;font-size:16px;color:#1a1a2e;font-weight:700;transform:scaleX(0.9673);">Amount</span>
<span id="t65" class="t" style="left:422.52px;top:862px;font-size:16px;color:#1a1a2e;font-weight:700;transform:scaleX(0.9704);">Status</span>
<span id="t66" class="t" style="left:641.27px;top:863px;font-size:16px;color:#1a1a2e;font-weight:700;transform:scaleX(0.9113);">Show Results:</span>
<span id="t67" class="t" style="left:768.27px;top:862px;font-size:16px;color:#1a1a2e;font-weight:700;transform:scaleX(0.9670);">10</span>
<span id="t68" class="t r" style="left:107.49px;top:917px;font-size:17px;color:#222;transform:scaleX(1.0990);">07/05/2025</span>
<span id="t69" class="t r" style="left:299.49px;top:917px;font-size:17px;color:#222;transform:scaleX(1.0292);">$10.00</span>
<span id="t70" class="t r" style="left:422.49px;top:917px;font-size:17px;color:#f5842a;">Pending</span>
<span id="t71" class="t r" style="left:107.49px;top:970px;font-size:17px;color:#222;transform:scaleX(1.0579);">14/05/2025</span>
<span id="t72" class="t r" style="left:299.49px;top:970px;font-size:17px;color:#222;transform:scaleX(1.0699);">$5.00</span>
<span id="t73" class="t r" style="left:422.49px;top:970px;font-size:17px;color:#f5842a;">Pending</span>
<span id="t74" class="t r" style="left:107.49px;top:1023px;font-size:17px;color:#222;transform:scaleX(1.0461);">21/05/2025</span>
<span id="t75" class="t r" style="left:299.49px;top:1023px;font-size:17px;color:#222;transform:scaleX(1.0292);">$10.00</span>
<span id="t76" class="t r" style="left:422.49px;top:1023px;font-size:17px;color:#f5842a;">Pending</span>
<span id="t77" class="t r" style="left:107.49px;top:1076px;font-size:17px;color:#222;transform:scaleX(1.0931);">28/05/2025</span>
<span id="t78" class="t r" style="left:299.49px;top:1076px;font-size:17px;color:#222;transform:scaleX(1.0292);">$10.00</span>
<span id="t79" class="t r" style="left:422.49px;top:1076px;font-size:17px;color:#f5842a;">Pending</span>
<span id="t80" class="t r" style="left:107.49px;top:1129px;font-size:17px;color:#222;transform:scaleX(1.1284);">04/06/2025</span>
<span id="t81" class="t r" style="left:299.49px;top:1129px;font-size:17px;color:#222;transform:scaleX(1.0292);">$10.00</span>
<span id="t82" class="t r" style="left:422.49px;top:1129px;font-size:17px;color:#f5842a;">Pending</span>
<span id="t83" class="t r" style="left:107.49px;top:1182px;font-size:17px;color:#222;transform:scaleX(1.0261);">11/06/2025</span>
<span id="t84" class="t r" style="left:299.49px;top:1182px;font-size:17px;color:#222;transform:scaleX(1.0292);">$10.00</span>
<span id="t85" class="t r" style="left:422.49px;top:1182px;font-size:17px;color:#f5842a;">Pending</span>
<span id="t86" class="t r" style="left:107.49px;top:1235px;font-size:17px;color:#222;transform:scaleX(1.0579);">18/06/2025</span>
<span id="t87" class="t r" style="left:299.49px;top:1235px;font-size:17px;color:#222;transform:scaleX(1.0292);">$10.00</span>
<span id="t88" class="t r" style="left:422.49px;top:1235px;font-size:17px;color:#f5842a;">Pending</span>
<span id="t89" class="t" style="left:891.09px;top:790px;font-size:22px;color:#222;font-weight:700;transform:scaleX(0.9262);">Payment History</span>
<span id="t90" class="t" style="left:919.52px;top:857px;font-size:16px;color:#1a1a2e;font-weight:700;transform:scaleX(0.9782);">Invoice Date</span>
<span id="t91" class="t" style="left:1110.77px;top:856px;font-size:16px;color:#1a1a2e;font-weight:700;transform:scaleX(0.9756);">Amount</span>
<span id="t92" class="t" style="left:1224.02px;top:856px;font-size:16px;color:#1a1a2e;font-weight:700;transform:scaleX(0.9755);">Status</span>
<span id="t93" class="t" style="left:1322.02px;top:857px;font-size:16px;color:#1a1a2e;font-weight:700;transform:scaleX(0.9554);">Date Processed</span>
<span id="t94" class="t" style="left:1543.77px;top:856px;font-size:16px;color:#1a1a2e;font-weight:700;transform:scaleX(0.9315);">Processed Through</span>
<span id="t95" class="t" style="left:1831.72px;top:863px;font-size:16px;color:#1a1a2e;font-weight:700;transform:scaleX(0.9023);">Show Results:</span>
<span id="t96" class="t" style="left:1958.02px;top:862px;font-size:16px;color:#1a1a2e;font-weight:700;transform:scaleX(0.9530);">10</span>
<span id="t97" class="t r" style="left:919.49px;top:917px;font-size:17px;color:#222;transform:scaleX(1.0990);">23/04/2025</span>
<span id="t98" class="t r" style="left:1110.74px;top:917px;font-size:17px;color:#222;transform:scaleX(1.0052);">$10.90</span>
<span id="t99" class="t r" style="left:1223.99px;top:917px;font-size:17px;color:#6c93cf;">Paid</span>
<span id="t100" class="t r" style="left:1321.99px;top:917px;font-size:17px;color:#222;transform:scaleX(1.0990);">23/04/2025</span>
<span id="t101" class="t r" style="left:1543.74px;top:917px;font-size:17px;color:#222;transform:scaleX(1.0416);">Stripe</span>
<span id="t102" class="t s" style="left:1994.90px;top:916px;font-size:20px;color:#c4c4c4;">$</span>
<span id="t103" class="t r" style="left:919.49px;top:970px;font-size:17px;color:#222;transform:scaleX(1.0638);">16/04/2025</span>
<span id="t104" class="t r" style="left:1110.74px;top:970px;font-size:17px;color:#222;transform:scaleX(1.0111);">$5.45</span>
<span id="t105" class="t r" style="left:1223.99px;top:970px;font-size:17px;color:#6c93cf;">Paid</span>
<span id="t106" class="t r" style="left:1321.99px;top:970px;font-size:17px;color:#222;transform:scaleX(1.0638);">16/04/2025</span>
<span id="t107" class="t r" style="left:1543.74px;top:970px;font-size:17px;color:#222;transform:scaleX(1.0416);">Stripe</span>
<span id="t108" class="t s" style="left:1994.90px;top:969px;font-size:20px;color:#c4c4c4;">$</span>
<span id="t109" class="t r" style="left:919.49px;top:1023px;font-size:17px;color:#222;transform:scaleX(1.1284);">09/04/2025</span>
<span id="t110" class="t r" style="left:1110.74px;top:1023px;font-size:17px;color:#222;transform:scaleX(1.0052);">$10.90</span>
<span id="t111" class="t r" style="left:1223.99px;top:1023px;font-size:17px;color:#6c93cf;">Paid</span>
<span id="t112" class="t r" style="left:1321.99px;top:1023px;font-size:17px;color:#222;transform:scaleX(1.1284);">09/04/2025</span>
<span id="t113" class="t r" style="left:1543.74px;top:1023px;font-size:17px;color:#222;transform:scaleX(1.0416);">Stripe</span>
<span id="t114" class="t s" style="left:1994.90px;top:1022px;font-size:20px;color:#c4c4c4;">$</span>
<span id="t115" class="t r" style="left:919.49px;top:1076px;font-size:17px;color:#222;transform:scaleX(1.1284);">02/04/2025</span>
<span id="t116" class="t r" style="left:1110.74px;top:1076px;font-size:17px;color:#222;transform:scaleX(1.0111);">$5.45</span>
<span id="t117" class="t r" style="left:1223.99px;top:1076px;font-size:17px;color:#6c93cf;">Paid</span>
<span id="t118" class="t r" style="left:1321.99px;top:1076px;font-size:17px;color:#222;transform:scaleX(1.1284);">02/04/2025</span>
<span id="t119" class="t r" style="left:1543.74px;top:1076px;font-size:17px;color:#222;transform:scaleX(1.0416);">Stripe</span>
<span id="t120" class="t s" style="left:1994.90px;top:1075px;font-size:20px;color:#c4c4c4;">$</span>
<span id="t121" class="t r" style="left:919.49px;top:1129px;font-size:17px;color:#222;transform:scaleX(1.0931);">26/03/2025</span>
<span id="t122" class="t r" style="left:1110.74px;top:1129px;font-size:17px;color:#222;transform:scaleX(1.0111);">$5.45</span>
<span id="t123" class="t r" style="left:1223.99px;top:1129px;font-size:17px;color:#6c93cf;">Paid</span>
<span id="t124" class="t r" style="left:1321.99px;top:1129px;font-size:17px;color:#222;transform:scaleX(1.0931);">26/03/2025</span>
<span id="t125" class="t r" style="left:1543.74px;top:1129px;font-size:17px;color:#222;transform:scaleX(1.0416);">Stripe</span>
<span id="t126" class="t s" style="left:1994.90px;top:1128px;font-size:20px;color:#c4c4c4;">$</span>
<span id="t127" class="t r" style="left:919.49px;top:1182px;font-size:17px;color:#222;transform:scaleX(1.0520);">19/03/2025</span>
<span id="t128" class="t r" style="left:1110.74px;top:1182px;font-size:17px;color:#222;transform:scaleX(1.0111);">$5.45</span>
<span id="t129" class="t r" style="left:1223.99px;top:1182px;font-size:17px;color:#6c93cf;">Paid</span>
<span id="t130" class="t r" style="left:1321.99px;top:1182px;font-size:17px;color:#222;transform:scaleX(1.0520);">19/03/2025</span>
<span id="t131" class="t r" style="left:1543.74px;top:1182px;font-size:17px;color:#222;transform:scaleX(1.0416);">Stripe</span>
<span id="t132" class="t s" style="left:1994.90px;top:1181px;font-size:20px;color:#c4c4c4;">$</span>
<span id="t133" class="t r" style="left:919.49px;top:1235px;font-size:17px;color:#222;transform:scaleX(1.0520);">12/03/2025</span>
<span id="t134" class="t r" style="left:1110.74px;top:1235px;font-size:17px;color:#222;transform:scaleX(1.0052);">$10.90</span>
<span id="t135" class="t r" style="left:1223.99px;top:1235px;font-size:17px;color:#6c93cf;">Paid</span>
<span id="t136" class="t r" style="left:1321.99px;top:1235px;font-size:17px;color:#222;transform:scaleX(1.0520);">12/03/2025</span>
<span id="t137" class="t r" style="left:1543.74px;top:1235px;font-size:17px;color:#222;transform:scaleX(1.0416);">Stripe</span>
<span id="t138" class="t s" style="left:1994.90px;top:1234px;font-size:20px;color:#c4c4c4;">$</span>
</div>
</body></html>
